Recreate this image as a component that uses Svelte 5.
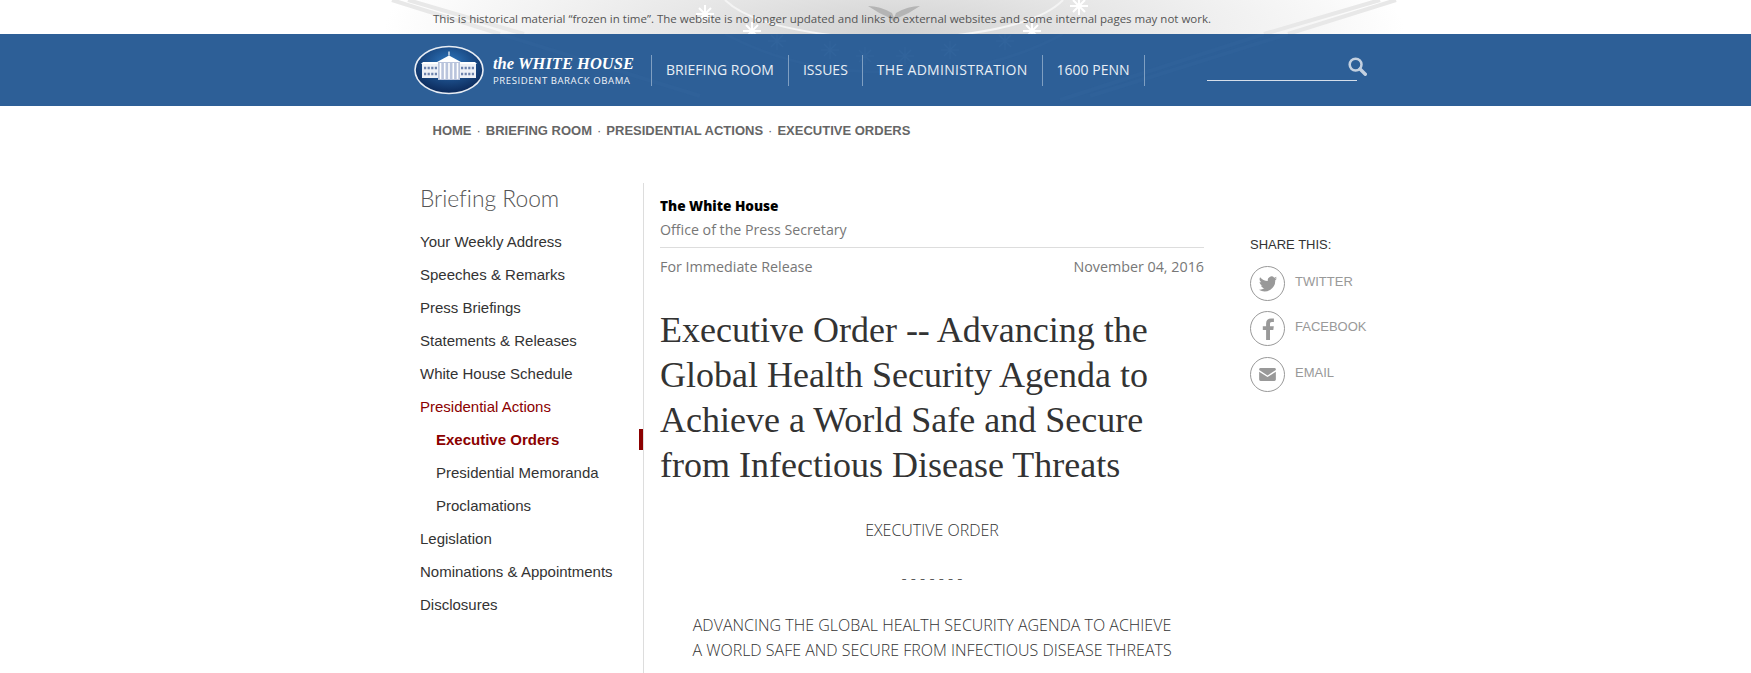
<script>
  const crumbs = ['Home', 'Briefing Room', 'Presidential Actions', 'Executive Orders'];
  const nav = ['Briefing Room', 'Issues', 'The Administration', '1600 Penn'];
  const side = [
    { label: 'Your Weekly Address' },
    { label: 'Speeches & Remarks' },
    { label: 'Press Briefings' },
    { label: 'Statements & Releases' },
    { label: 'White House Schedule' },
    { label: 'Presidential Actions', kind: 'parent' },
    { label: 'Executive Orders', kind: 'current' },
    { label: 'Presidential Memoranda', kind: 'sub' },
    { label: 'Proclamations', kind: 'sub' },
    { label: 'Legislation' },
    { label: 'Nominations & Appointments' },
    { label: 'Disclosures' }
  ];
  // stars of the seal watermark, page coordinates
  const topStars = [[705, 14], [752, 31], [1079, 6], [1032, 31]];
  const barStars = [[777, 41], [830, 50], [865, 56], [905, 56], [950, 50], [1005, 41]];
  const star = 'M-9 0H9M0 -9V9M-6 -6L6 6M-6 6L6 -6';
</script>

<div class="page">
  <div class="notice">
    <svg class="art" viewBox="0 0 1751 34" width="1751" height="34" aria-hidden="true">
      <defs>
        <radialGradient id="fade" gradientUnits="userSpaceOnUse" cx="0" cy="0" r="1" gradientTransform="translate(894 30) scale(510 120)">
          <stop offset="0" stop-color="#d2d2d2" />
          <stop offset="0.45" stop-color="#e8e8e8" />
          <stop offset="0.85" stop-color="#f8f8f8" />
          <stop offset="1" stop-color="#fff" />
        </radialGradient>
      </defs>
      <rect x="384" width="1020" height="34" fill="url(#fade)" />
      <path d="M392 0L500 34M408 0L524 34M1396 0L1288 34M1380 0L1264 34" stroke="#e8e8e8" stroke-width="4" fill="none" />
      <path d="M725 0Q760 34 894 40Q1030 34 1063 0" stroke="#f4f4f4" stroke-width="2" fill="none" />
      <path d="M868 6Q880 6 892 13L894 18L896 13Q908 6 920 6Q910 13 898 18L894 22L890 18Q878 13 868 6Z" fill="#b4b4b4" />
      {#each topStars as [x, y]}
        <path transform="translate({x} {y})" d={star} stroke="#fff" stroke-width="2" />
      {/each}
    </svg>
    <p>This is historical material “frozen in time”. The website is no longer updated and links to external websites and some internal pages may not work.</p>
  </div>

  <header class="bar">
    <svg class="art" viewBox="0 0 1751 72" width="1751" height="72" aria-hidden="true">
      <path d="M725 0Q800 40 894 38Q990 40 1063 0" stroke="#2f6199" stroke-width="3" fill="none" />
      <path d="M500 0L700 62M1288 0L1090 62M1264 0L1060 66" stroke="#2f6199" stroke-width="4" fill="none" />
      {#each barStars as [x, y]}
        <path transform="translate({x} {y - 34})" d={star} stroke="#31639b" stroke-width="1.500" />
      {/each}
    </svg>
    <a class="brand" href="#home">
      <svg class="seal" viewBox="0 0 70 50" width="70" height="50" aria-hidden="true">
        <defs>
          <radialGradient id="sky" cx="0.5" cy="0.35" r="0.65">
            <stop offset="0" stop-color="#2f78c0" />
            <stop offset="1" stop-color="#0b2858" />
          </radialGradient>
        </defs>
        <ellipse cx="35" cy="25" rx="34" ry="23.500" fill="url(#sky)" stroke="#e8edf4" stroke-width="1.600" />
        <rect x="8" y="19" width="54" height="14" fill="#eef1f7" />
        <path d="M7 19H63L61 17H9Z" fill="#fff" />
        <path d="M23 17L35 10.500L47 17Z" fill="#fff" />
        <rect x="24" y="17" width="22" height="18" fill="#b9c4dc" />
        <path d="M26.500 18v16M30.700 18v16M35 18v16M39.300 18v16M43.500 18v16" stroke="#fff" stroke-width="1.600" />
        <path d="M10 23h13M10 29h13M47 23h13M47 29h13" stroke="#6d83ad" stroke-width="2.400" stroke-dasharray="2.200 1.400" />
        <rect x="34.400" y="6.500" width="1.200" height="4" fill="#fff" />
      </svg>
      <span class="brand-text">
        <span class="brand-name"><i>the</i> WHITE HOUSE</span>
        <span class="brand-sub">PRESIDENT BARACK OBAMA</span>
      </span>
    </a>
    <nav class="main-nav">
      {#each nav as item}
        <a href="#nav">{item}</a>
      {/each}
    </nav>
    <div class="search">
      <svg viewBox="0 0 18 18" width="19" height="19" aria-hidden="true">
        <circle cx="7.200" cy="7.200" r="5.600" fill="none" stroke="#c3d0e0" stroke-width="2.400" />
        <path d="M11.400 11.400L16.400 16.400" stroke="#c3d0e0" stroke-width="3.200" stroke-linecap="round" />
      </svg>
    </div>
  </header>

  <div class="crumbs">
    {#each crumbs as c, i}
      {#if i > 0}<span class="dot">·</span>{/if}
      <a href="#c">{c}</a>
    {/each}
  </div>

  <div class="columns">
    <aside class="sidebar">
      <h2>Briefing Room</h2>
      <ul>
        {#each side as s}
          <li class={s.kind}><a href="#s">{s.label}</a></li>
        {/each}
      </ul>
    </aside>

    <main class="content">
      <div class="org">The White House</div>
      <div class="office">Office of the Press Secretary</div>
      <div class="meta">
        <span>For Immediate Release</span>
        <span>November 04, 2016</span>
      </div>
      <h1>Executive Order -- Advancing the Global Health Security Agenda to Achieve a World Safe and Secure from Infectious Disease Threats</h1>
      <p class="centered first">EXECUTIVE ORDER</p>
      <p class="centered dashes">- - - - - - -</p>
      <p class="centered">ADVANCING THE GLOBAL HEALTH SECURITY AGENDA TO ACHIEVE<br />A WORLD SAFE AND SECURE FROM INFECTIOUS DISEASE THREATS</p>
    </main>

    <aside class="share">
      <div class="share-title">SHARE THIS:</div>
      <a class="share-row" href="#t">
        <span class="ring">
          <svg viewBox="0 0 24 24" width="20" height="20" aria-hidden="true">
            <path d="M23 5.100c-.8.4-1.700.6-2.600.7.9-.6 1.600-1.400 2-2.500-.9.5-1.800.9-2.900 1.100A4.500 4.500 0 0 0 11.800 8.500C8 8.300 4.700 6.500 2.500 3.800c-1.200 2.100-.6 4.700 1.400 6-.7 0-1.400-.2-2-.6 0 2.200 1.500 4.100 3.600 4.500-.7.200-1.400.2-2 .1.600 1.800 2.200 3.100 4.200 3.100A9 9 0 0 1 1 18.800 12.800 12.800 0 0 0 20.700 7.400c.9-.6 1.700-1.400 2.300-2.300z" fill="#999" />
          </svg>
        </span>
        <span>TWITTER</span>
      </a>
      <a class="share-row" href="#f">
        <span class="ring">
          <svg viewBox="0 0 24 24" width="24" height="24" aria-hidden="true">
            <path d="M14 23V13h3.300l.5-3.800H14V6.900c0-1.100.3-1.900 1.900-1.900h2V1.600c-.4 0-1.600-.1-2.900-.1-2.900 0-4.900 1.800-4.900 5v2.700H6.800V13h3.300v10z" fill="#999" />
          </svg>
        </span>
        <span>FACEBOOK</span>
      </a>
      <a class="share-row" href="#e">
        <span class="ring">
          <svg viewBox="0 0 18 14" width="17" height="13" aria-hidden="true">
            <path d="M1.500 0h15A1.500 1.500 0 0 1 18 1.500v.7L9 8 0 2.200v-.7A1.500 1.500 0 0 1 1.500 0z" fill="#999" />
            <path d="M0 4l9 5.700L18 4v8.500a1.500 1.500 0 0 1-1.500 1.500h-15A1.500 1.500 0 0 1 0 12.500z" fill="#999" />
          </svg>
        </span>
        <span>EMAIL</span>
      </a>
    </aside>
  </div>
</div>

<style>
  :global(body) {
    margin: 0;
    background: #fff;
  }

  a {
    color: inherit;
    text-decoration: none;
  }

  .page {
    height: 673px;
    overflow: hidden;
  }

  .art {
    position: absolute;
    left: 0;
    top: 0;
  }

  .notice {
    position: relative;
    height: 34px;
  }

  .notice p {
    position: relative;
    margin: 0;
    padding: 11px 0 0 433px;
    font: 11.500px/16px "Open Sans", sans-serif;
    color: #555;
  }

  .bar {
    position: relative;
    display: flex;
    align-items: center;
    height: 72px;
    padding-left: 414px;
    box-sizing: border-box;
    background: #2d5f97;
    color: #fff;
    overflow: hidden;
  }

  .brand {
    position: relative;
    display: flex;
    align-items: center;
    gap: 9px;
    width: 237px;
    flex: none;
  }

  .brand-text {
    display: flex;
    flex-direction: column;
  }

  .brand-name {
    font: italic bold 16.500px/19px "Liberation Serif", serif;
    white-space: nowrap;
  }

  .brand-sub {
    margin-top: 1px;
    font: 9.600px/13px "Open Sans", sans-serif;
    letter-spacing: 0.550px;
    color: #f0f4f9;
    white-space: nowrap;
  }

  .main-nav {
    position: relative;
    display: flex;
    height: 31px;
    border-left: 1px solid #7f9fc2;
  }

  .main-nav a {
    padding: 0 14px;
    border-right: 1px solid #7f9fc2;
    font: 14px/29px "Open Sans", sans-serif;
    color: #e8eef5;
    text-transform: uppercase;
    white-space: nowrap;
  }

  .main-nav a:nth-child(3) {
    letter-spacing: 0.300px;
  }

  .search {
    position: relative;
    width: 150px;
    height: 27px;
    margin-left: 62px;
    margin-top: 19px;
    align-self: flex-start;
    border-bottom: 1px solid #d5deea;
  }

  .search svg {
    position: absolute;
    right: -10px;
    top: 4px;
  }

  .crumbs {
    display: flex;
    gap: 5px;
    padding: 17px 0 0 432.500px;
    font: bold 13px/16px "Liberation Sans", sans-serif;
    color: #666;
    text-transform: uppercase;
  }

  .dot {
    font-weight: normal;
  }

  .columns {
    display: flex;
    margin-top: 44px;
    padding-left: 420px;
  }

  .sidebar {
    width: 223px;
    flex: none;
    border-right: 1px solid #ddd;
    height: 500px;
  }

  .sidebar h2 {
    margin: 0 0 11px;
    font: 300 22.800px/31px "Lato", sans-serif;
    font-variant-ligatures: none;
    color: #555;
  }

  .sidebar ul {
    margin: 0;
    padding: 0;
    list-style: none;
  }

  .sidebar li {
    position: relative;
    font: 15px/33px "Liberation Sans", sans-serif;
    color: #333;
  }

  .sidebar li.parent {
    color: #8b0000;
  }

  .sidebar li.sub,
  .sidebar li.current {
    padding-left: 16px;
  }

  .sidebar li.current {
    font-weight: bold;
    color: #8b0000;
  }

  .sidebar li.current::after {
    content: "";
    position: absolute;
    right: 0;
    top: 6px;
    width: 4px;
    height: 21px;
    background: #8b0000;
  }

  .content {
    width: 544px;
    flex: none;
    margin-left: 16px;
    padding-top: 13px;
    font-family: "Open Sans", sans-serif;
    color: #666;
  }

  .org {
    font: 800 13.600px/20px "Open Sans", sans-serif;
    color: #000;
  }

  .office {
    font-size: 14.200px;
    line-height: 20px;
    margin-top: 4px;
    padding-bottom: 7px;
    border-bottom: 1px solid #ddd;
    color: #777;
  }

  .meta {
    display: flex;
    justify-content: space-between;
    margin-top: 9px;
    font-size: 14.300px;
    line-height: 20px;
    color: #777;
  }

  h1 {
    margin: 30.500px 0 0;
    font: 36px/45.200px "Liberation Serif", serif;
    color: #333;
  }

  .centered {
    margin: 0;
    text-align: center;
    font-weight: 300;
    font-size: 16px;
    line-height: 24.500px;
    color: #333;
  }

  .first {
    margin-top: 30px;
  }

  .dashes {
    margin: 23px 0;
  }

  .share {
    margin-left: 46px;
    padding-top: 54px;
    width: 130px;
    font: 13px/16px "Liberation Sans", sans-serif;
  }

  .share-title {
    color: #333;
    margin-bottom: 13px;
  }

  .share-row {
    display: flex;
    align-items: flex-start;
    gap: 10px;
    color: #999;
    height: 46px;
    line-height: 32px;
  }

  .share-row:nth-child(2) {
    height: 45px;
  }

  .ring {
    display: flex;
    align-items: center;
    justify-content: center;
    width: 35px;
    height: 35px;
    box-sizing: border-box;
    border: 1px solid #999;
    border-radius: 50%;
  }
</style>
